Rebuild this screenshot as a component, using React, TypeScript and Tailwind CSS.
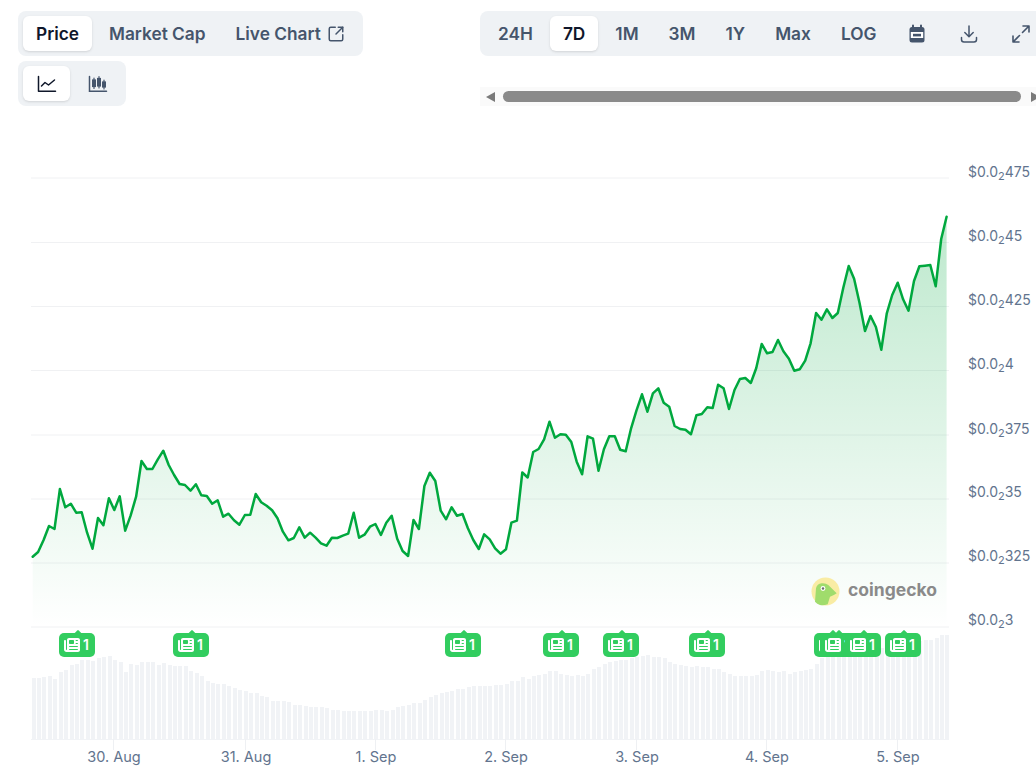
import { SquareArrowOutUpRight } from "lucide-react";
import { FaNewspaper } from "react-icons/fa6";

const PRICE_Y = [
  556.7, 552, 540, 526, 529, 489, 507.3, 503.7, 512.7, 512.3, 532.7, 548.7, 518, 525.3, 498.3, 510, 496.3, 530.7, 515.7, 496.7,
  461, 469, 469, 459.3, 450.7, 465, 475, 484, 485, 490.7, 484.3, 495.3, 496, 503.7, 500.3, 516.7, 513.7, 520.3, 524.7, 515,
  514.7, 494, 502.3, 505.7, 510.3, 518.3, 531.7, 540.3, 538, 527.3, 537.7, 532.7, 537.7, 543.3, 545.7, 537.7, 538, 535.7, 533.7, 512.7,
  537.7, 534.7, 526.7, 524, 535, 522.7, 515.7, 538.7, 551, 556, 520, 529, 486, 472.7, 481, 510.7, 519.3, 507.3, 515.7, 514,
  528.3, 540, 549, 534.3, 539.3, 548.3, 553.7, 549.3, 522.7, 520.7, 472.5, 477.5, 452, 449, 439.3, 421.7, 437.7, 434.3, 434.7, 442,
  461.7, 474.3, 436.3, 438.7, 470.7, 449.3, 436.3, 436.3, 449.7, 451.3, 428.3, 410.3, 394.3, 411.7, 393.3, 388.3, 402.7, 406.7, 426, 429,
  429.7, 434.3, 415.3, 414, 407.3, 408, 384.7, 388.3, 409, 390, 379, 378, 383, 368.3, 344, 353.3, 352, 340, 351.3, 358.7,
  370.7, 369.3, 360.7, 343.3, 313, 319.7, 309.3, 318, 313, 287.7, 266, 278.7, 303.3, 331, 316, 327, 349.7, 313.3, 295, 282.7,
  299.3, 310.7, 281, 266.3, 265.7, 265, 286.3, 239, 216.7,
];

const VOLUME_TOP = [
  678, 678, 677, 676, 679, 672, 670, 665, 664, 660, 660, 661, 658, 657, 656, 660, 662, 672, 664, 665, 662, 662, 662, 665, 663, 665, 666, 666, 666, 671,
  673, 676, 681, 683, 684, 684, 686, 688, 690, 691, 693, 693, 696, 697, 701, 701, 701, 702, 705, 705, 706, 707, 707, 707, 708, 710, 710, 711, 711, 711,
  711, 711, 711, 710, 710, 711, 710, 707, 706, 705, 703, 703, 700, 697, 695, 693, 692, 691, 689, 689, 687, 686, 686, 686, 686, 685, 685, 684, 681, 681,
  677, 679, 676, 675, 674, 671, 671, 674, 675, 676, 675, 676, 674, 669, 667, 664, 662, 661, 660, 660, 658, 657, 656, 655, 657, 657, 658, 662, 664, 665,
  666, 667, 666, 667, 667, 669, 669, 672, 674, 676, 676, 676, 676, 675, 671, 670, 671, 672, 671, 674, 672, 671, 670, 669, 664, 658, 657, 657, 656, 655,
  654, 653, 652, 651, 650, 649, 648, 647, 646, 645, 644, 643, 642, 641, 640, 640, 638, 635, 635,
];

const GRID_Y = [178, 242.5, 306.5, 370.5, 435, 499, 563, 627];
const Y_LABELS = ["475", "45", "425", "4", "375", "35", "325", "3"];
const Y_LABEL_BASE = [177, 241, 305, 369, 434, 497, 561, 625];
const X_LABELS: [number, string][] = [
  [113, "30. Aug"],
  [245, "31. Aug"],
  [375, "1. Sep"],
  [505, "2. Sep"],
  [636, "3. Sep"],
  [766, "4. Sep"],
  [897, "5. Sep"],
];
const NEWS_LEFT = [59, 173, 445, 543, 603, 689, 814, 820, 845, 885];

const linePoints = PRICE_Y.map((y, i) => `${(32.7 + i * 5.44).toFixed(1)},${y}`).join(" ");

function LineIcon() {
  return (
    <svg width="20" height="18" viewBox="0 0 20 18" fill="none" stroke="#0f172a" strokeWidth="1.5" strokeLinecap="round" strokeLinejoin="round">
      <path d="M1.5 1.5V16.2H18.5" />
      <path d="M4.5 11L8 7.5L11.5 10L17.5 5" />
    </svg>
  );
}

function CandleIcon() {
  return (
    <svg width="20" height="18" viewBox="0 0 20 18" fill="none" stroke="#45556c" strokeWidth="1.2" strokeLinecap="round">
      <path d="M1.5 1.5V16.2H18.5" strokeWidth="1.5" />
      <path d="M6 3V13.5M11 1.5V13M16 5V14" />
      <rect x="4.6" y="5" width="2.8" height="6.5" fill="#45556c" />
      <rect x="9.6" y="3.5" width="2.8" height="7.5" fill="#45556c" />
      <rect x="14.6" y="7" width="2.8" height="5" fill="#45556c" />
    </svg>
  );
}

function CalendarIcon() {
  return (
    <svg width="20" height="20" viewBox="0 0 20 20" fill="none">
      <path d="M6 1.5V4M14 1.5V4" stroke="#45556c" strokeWidth="2" strokeLinecap="round" />
      <rect x="2.5" y="3" width="15" height="15.5" rx="2.5" fill="#45556c" />
      <rect x="3.8" y="8" width="12.4" height="6" fill="#fff" />
      <rect x="6" y="9.8" width="8" height="2.6" fill="#45556c" />
    </svg>
  );
}

function DownloadIcon() {
  return (
    <svg width="20" height="20" viewBox="0 0 20 20" fill="none" stroke="#45556c" strokeWidth="1.5" strokeLinecap="round" strokeLinejoin="round">
      <path d="M10 2V12.5M5.8 8.5L10 12.7L14.2 8.5" />
      <path d="M2.5 13.5V15.5C2.5 17 3.5 18 5 18H15C16.5 18 17.5 17 17.5 15.5V13.5" />
    </svg>
  );
}

function ExpandIcon() {
  return (
    <svg width="20" height="20" viewBox="0 0 20 20" fill="none" stroke="#45556c" strokeWidth="1.6" strokeLinecap="round" strokeLinejoin="round">
      <path d="M11.5 8.5L18 2M12 2H18V8" />
      <path d="M8.5 11.5L2 18M2 12V18H8" />
    </svg>
  );
}

function NewsBadge({ left }: { left: number }) {
  return (
    <div
      className="absolute top-[523px] flex h-[24px] w-[36px] items-center gap-[3px] rounded-[5px] bg-[#32cd5f] pl-[5px] text-sm font-semibold text-white"
      style={{ left }}
    >
      <div className="absolute -top-[2px] left-[16px] h-[6px] w-[6px] rotate-45 rounded-[1px] bg-[#32cd5f]" />
      <FaNewspaper className="relative h-[16px] w-[16px]" />
      <span className="relative">1</span>
    </div>
  );
}

const tabClass = "flex h-[35px] shrink-0 items-center rounded-md px-[13px] text-[17.3px] font-semibold text-slate-600";
const activeTabClass = "flex h-[35px] shrink-0 items-center rounded-md bg-white px-[13px] text-[17.3px] font-semibold text-slate-900 shadow-sm";
const iconTabClass = "flex h-[35px] shrink-0 items-center rounded-md px-[14px]";

export default function App() {
  return (
    <div className="h-[771px] w-[1036px] overflow-hidden bg-white font-['Inter',sans-serif]">
      <div className="flex h-[110px] justify-between pt-[11px]">
        {/* Price tabs and chart type */}
        <div className="flex flex-col items-start gap-[5px] pl-[18px]">
          <div className="flex gap-1 rounded-lg bg-[#eff2f5] p-[5px]">
            <div className={activeTabClass}>Price</div>
            <div className={tabClass}>Market Cap</div>
            <div className={tabClass}>
              Live Chart
              <SquareArrowOutUpRight className="ml-[6px] h-[18px] w-[18px]" strokeWidth={2} />
            </div>
          </div>
          <div className="flex gap-[4px] rounded-lg bg-[#eff2f5] p-[5px]">
            <div className="flex h-[35px] w-[47px] items-center justify-center rounded-md bg-white shadow-sm">
              <LineIcon />
            </div>
            <div className="flex h-[35px] w-[47px] items-center justify-center rounded-md">
              <CandleIcon />
            </div>
          </div>
        </div>

        {/* Range toolbar, cut off by its own scrollbar */}
        <div className="w-[556px] shrink-0 overflow-hidden">
          <div className="flex w-[590px] gap-1 rounded-lg bg-[#eff2f5] p-[5px]">
            <div className={tabClass}>24H</div>
            <div className={activeTabClass}>7D</div>
            <div className={tabClass}>1M</div>
            <div className={tabClass}>3M</div>
            <div className={tabClass}>1Y</div>
            <div className={tabClass}>Max</div>
            <div className={tabClass}>LOG</div>
            <div className={iconTabClass}>
              <CalendarIcon />
            </div>
            <div className={iconTabClass}>
              <DownloadIcon />
            </div>
            <div className={iconTabClass}>
              <ExpandIcon />
            </div>
          </div>
          <div className="mt-[31px] flex h-[19px] items-center bg-[#fafafa]">
            <div className="ml-[6px] h-0 w-0 shrink-0 border-y-[5.5px] border-r-[9px] border-y-transparent border-r-[#7a7a7a]" />
            <div className="ml-[8px] h-[11px] w-[518px] shrink-0 rounded-full bg-[#8a8a8a]" />
            <div className="ml-[10px] h-0 w-0 shrink-0 border-y-[5.5px] border-l-[9px] border-y-transparent border-l-[#7a7a7a]" />
          </div>
        </div>
      </div>

      <div className="relative h-[661px]">
        <svg className="block" width="1036" height="661" viewBox="0 0 1036 661">
          <defs>
            <linearGradient id="priceFill" gradientUnits="userSpaceOnUse" x1="0" y1="217" x2="0" y2="627">
              <stop offset="0" stopColor="#00a83e" stopOpacity="0.26" />
              <stop offset="1" stopColor="#00a83e" stopOpacity="0" />
            </linearGradient>
          </defs>
          <g transform="translate(0 -110)">
            {GRID_Y.map((y) => (
              <line key={y} x1="31" x2="949" y1={y} y2={y} stroke="#f0f1f3" />
            ))}
            <polygon points={`32.7,627 ${linePoints} 946.6,627`} fill="url(#priceFill)" />
            <polyline points={linePoints} fill="none" stroke="#00a83e" strokeWidth="2.5" strokeLinejoin="round" strokeLinecap="round" />

            {VOLUME_TOP.map((top, i) => (
              <rect key={i} x={Math.round(31.5 + i * 5.44)} y={top} width="4" height={739 - top} fill="#f1f3f6" />
            ))}
            <line x1="31" x2="949" y1="739.5" y2="739.5" stroke="#f1f3f6" />

            {Y_LABELS.map((label, i) => (
              <text key={label} x="968" y={Y_LABEL_BASE[i]} className="fill-slate-500 text-[14px]">
                $0.0
                <tspan dy="3" className="text-[11px]">
                  2
                </tspan>
                <tspan dy="-3">{label}</tspan>
              </text>
            ))}

            {X_LABELS.map(([x, label]) => (
              <g key={label}>
                <line x1={x + 0.5} x2={x + 0.5} y1="739" y2="750" stroke="#eef0f3" />
                <text x={x + 1} y="762" textAnchor="middle" className="fill-slate-500 text-[14.5px]">
                  {label}
                </text>
              </g>
            ))}

            {/* Watermark */}
            <circle cx="825.5" cy="591.5" r="14" fill="#f9ecA4" />
            <path d="M815 601.7L816 588.3Q817 583.8 821.7 583.3Q826 583 828.3 585L836.7 593.3Q833 596 830 596.7L827.7 604.3Q823 605.8 820 605Q817 604 815 601.7Z" fill="#a0dc6c" />
            <circle cx="823" cy="588.5" r="2.4" fill="#fff" />
            <circle cx="823" cy="588.5" r="1.2" fill="#6b6b6b" />
            <text x="848" y="596" className="fill-[#8a8a8a] text-[17.5px] font-bold">
              coingecko
            </text>
          </g>
        </svg>

        {NEWS_LEFT.map((left) => (
          <NewsBadge key={left} left={left} />
        ))}
      </div>
    </div>
  );
}
